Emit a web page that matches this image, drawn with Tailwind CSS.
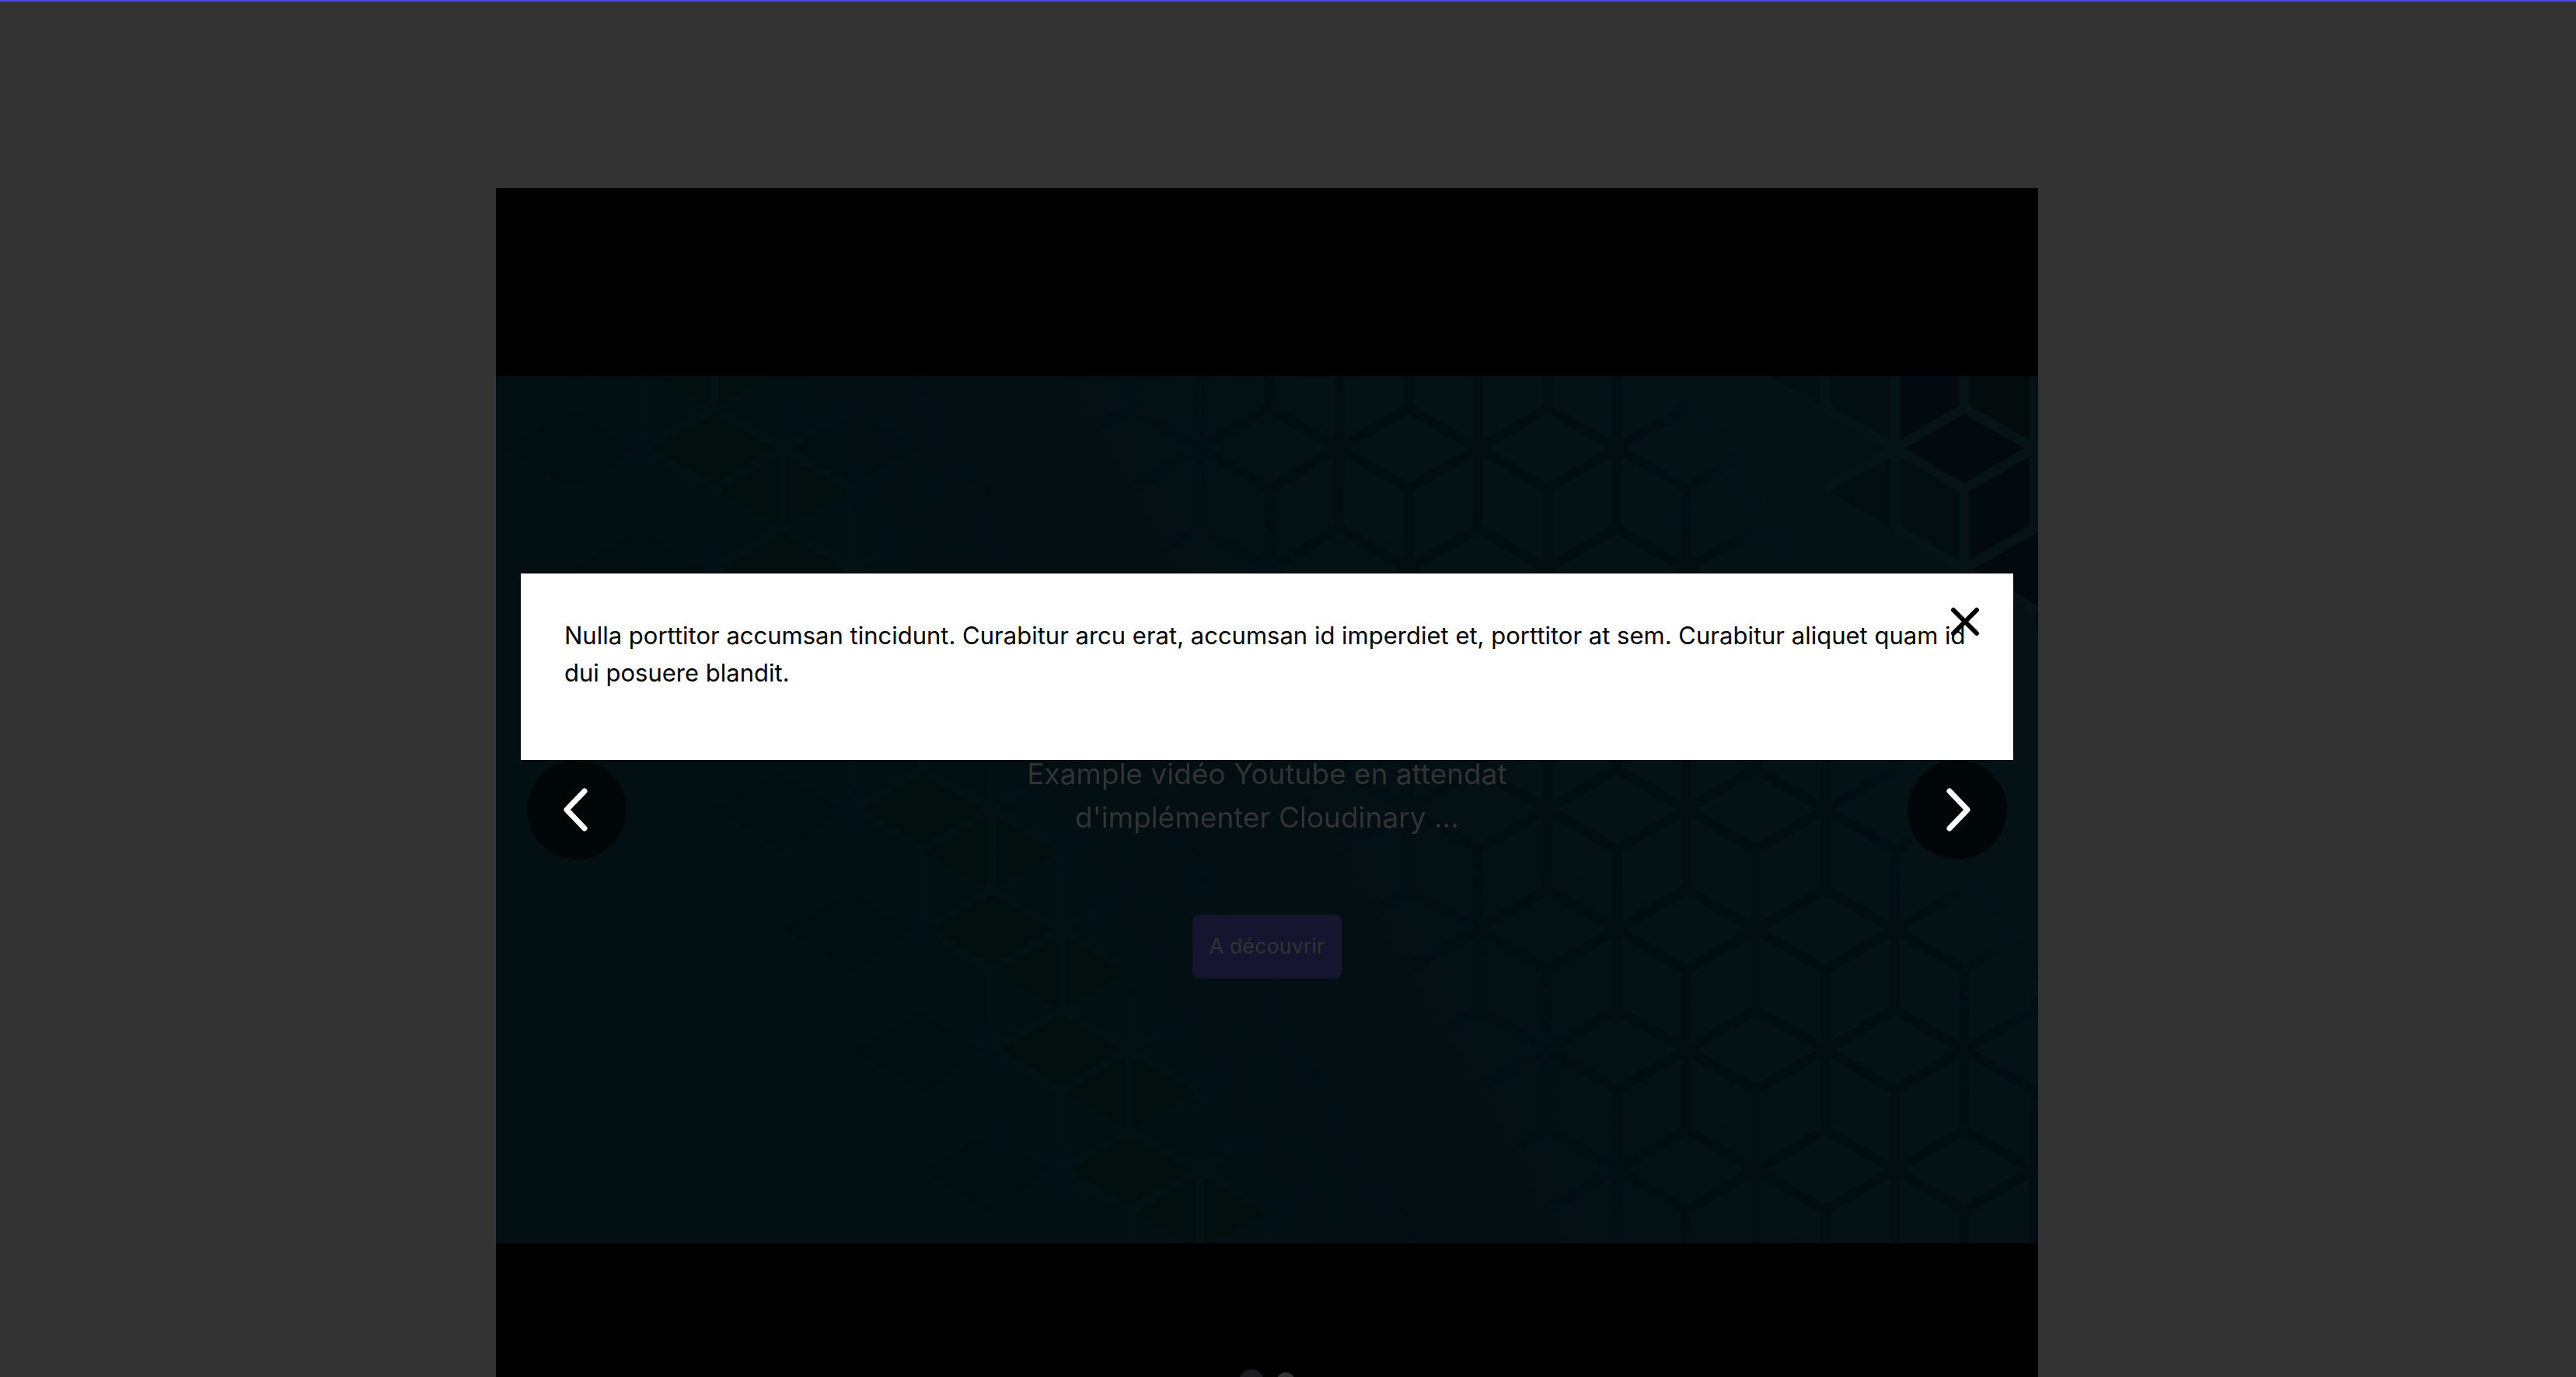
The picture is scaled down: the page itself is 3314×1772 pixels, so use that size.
<!DOCTYPE html>
<html lang="fr">
<head>
<meta charset="utf-8">
<title>Carousel</title>
<script src="https://cdn.jsdelivr.net/npm/@tailwindcss/browser@4"></script>
</head>
<body class="h-screen overflow-hidden border-t-2 border-[#4f4bdc] bg-[#333333] pr-[54px] font-[Inter,sans-serif]">
<main class="pt-60">
  <section class="relative mx-auto flex h-[1600px] w-full max-w-[1984px] flex-col justify-center bg-black" aria-label="Carousel">
    <div class="relative grid aspect-video w-full overflow-hidden bg-[#030f13]">
      <svg class="col-start-1 row-start-1 h-full w-full" viewBox="0 0 1984 1116" preserveAspectRatio="xMidYMid slice" aria-hidden="true">
        <defs>
          <pattern id="cubes" x="101.2" y="-216.6" width="178.8" height="309.6" patternUnits="userSpaceOnUse">
            <path fill="none" stroke="#fff" stroke-width="12" d="M0 51.6L89.4 0L178.8 51.6M0 51.6V258M178.8 51.6V258M89.4 0V103.2M89.4 206.4V309.6M89.4 103.2L178.8 154.8L89.4 206.4L0 154.8ZM0 258L89.4 309.6L178.8 258" transform="translate(0 0)"/>
          </pattern>
          <linearGradient id="base" gradientUnits="userSpaceOnUse" x1="0" y1="0" x2="1472" y2="-850">
            <stop offset="0" stop-color="#031013"/><stop offset=".36" stop-color="#030f13"/><stop offset=".6" stop-color="#041216"/><stop offset="1" stop-color="#041216"/>
          </linearGradient>
          <linearGradient id="bandDark" gradientUnits="userSpaceOnUse" x1="0" y1="0" x2="1472" y2="-850">
            <stop offset=".38" stop-color="#000"/><stop offset=".5" stop-color="#fff"/><stop offset=".7" stop-color="#fff"/><stop offset=".765" stop-color="#888"/><stop offset=".785" stop-color="#000"/>
          </linearGradient>
          <linearGradient id="bandLight" gradientUnits="userSpaceOnUse" x1="0" y1="0" x2="1472" y2="-850">
            <stop offset="0" stop-color="#000"/><stop offset=".08" stop-color="#fff"/><stop offset=".18" stop-color="#fff"/><stop offset=".28" stop-color="#000"/>
          </linearGradient>
          <mask id="right" maskUnits="userSpaceOnUse" x="0" y="0" width="1984" height="1116"><rect width="1984" height="1116" fill="url(#bandDark)"/></mask>
          <mask id="left" maskUnits="userSpaceOnUse" x="0" y="0" width="1984" height="1116"><rect width="1984" height="1116" fill="url(#bandLight)"/></mask>
          <mask id="lines" maskUnits="userSpaceOnUse" x="0" y="0" width="1984" height="1116"><rect width="1984" height="1116" fill="url(#cubes)"/></mask>
          <path id="face" d="M-89.4 0L0 -51.6L89.4 0L0 51.6Z"/>
          <g id="pair"><use href="#face"/><use href="#face" x="89.4" y="51.6"/></g>
        </defs>
        <rect width="1984" height="1116" fill="url(#base)"/>
        <g mask="url(#right)">
          <g mask="url(#lines)"><rect width="1984" height="1116" fill="#030e12"/></g>
        </g>
        <g fill="#030e13" opacity=".5">
          <use href="#face" x="101" y="93"/><use href="#face" x="458" y="93"/><use href="#face" x="190" y="248"/><use href="#face" x="369" y="558"/>
          <use href="#face" x="460" y="713"/><use href="#face" x="549" y="868"/><use href="#face" x="638" y="1023"/>
        </g>
        <g fill="#030e0f">
          <use href="#pair" x="190" y="-62"/><use href="#pair" x="280" y="93"/><use href="#pair" x="369" y="248"/><use href="#pair" x="459" y="403"/>
          <use href="#pair" x="548" y="558"/><use href="#pair" x="638" y="712"/><use href="#pair" x="727" y="867"/><use href="#pair" x="816" y="1022"/>
        </g>
        <g mask="url(#left)"><g mask="url(#lines)"><rect width="1984" height="1116" fill="#031014"/></g></g>
        <path fill="#030f13" d="M1640 0H1800V93L1710 41ZM1710 145L1800 93V196L1710 145Z"/>
        <path fill="#020a10" d="M1800 0H1889V41L1800 93ZM1889 145L1979 93V196L1889 248ZM1889 248L1984 194V336L1979 300ZM1889 41L1979 93L1889 145L1800 93Z"/>
        <path fill="#030b0d" d="M1889 0H1979V93L1889 41Z"/>
        <path fill="#030e13" d="M1800 93L1889 145V248L1710 145Z"/>
        <path fill="none" stroke="#051317" stroke-width="13" d="M1710 0V41M1800 0V196M1889 0V41L1800 93L1889 145L1979 93L1889 41M1889 145V248L1984 193M1979 0V93M1710 41L1800 93L1710 145M1800 196L1889 248L1984 303M1979 93V196"/>
      </svg>
      <div class="col-start-1 row-start-1 flex flex-col items-center pt-[484px]">
        <p class="w-[640px] text-center text-[37px] leading-14 text-[#333333]">Example vidéo Youtube en attendat d'implémenter Cloudinary ...</p>
        <button type="button" class="mt-[97px] h-[82px] w-48 rounded-lg bg-[#15152f] text-[27px] text-[#333333]">A découvrir</button>
      </div>
    </div>

    <div class="absolute inset-x-10 top-1/2 flex -translate-y-1/2 justify-between">
      <button type="button" aria-label="Précédent" class="flex size-32 items-center justify-center rounded-full bg-black/60">
        <svg class="size-16" viewBox="0 0 64 64" fill="none" stroke="#fff" stroke-width="7" stroke-linecap="round" stroke-linejoin="round"><path d="M42 8L19 32L42 56"/></svg>
      </button>
      <button type="button" aria-label="Suivant" class="flex size-32 items-center justify-center rounded-full bg-black/60">
        <svg class="size-16" viewBox="0 0 64 64" fill="none" stroke="#fff" stroke-width="7" stroke-linecap="round" stroke-linejoin="round"><path d="M22 8L45 32L22 56"/></svg>
      </button>
    </div>

    <div class="absolute inset-x-0 bottom-12 flex items-center justify-center gap-4">
      <button type="button" aria-label="Diapositive 1" class="size-8 rounded-full bg-[#1b1b20]"></button>
      <button type="button" aria-label="Diapositive 2" class="size-6 rounded-full bg-[#333333]"></button>
    </div>

    <div role="dialog" aria-label="Information" class="absolute inset-x-8 top-[496px] h-60 bg-white py-14 pr-12 pl-14">
      <p class="text-[31px] leading-12 text-black">Nulla porttitor accumsan tincidunt. Curabitur arcu erat, accumsan id imperdiet et, porttitor at sem. Curabitur aliquet quam id dui posuere blandit.</p>
      <button type="button" aria-label="Fermer" class="absolute top-8 right-8 size-15">
        <svg class="size-full" viewBox="0 0 60 60" fill="none" stroke="#000" stroke-width="6" stroke-linecap="round"><path d="M15 15L45 45M45 15L15 45"/></svg>
      </button>
    </div>
  </section>
</main>
</body>
</html>
